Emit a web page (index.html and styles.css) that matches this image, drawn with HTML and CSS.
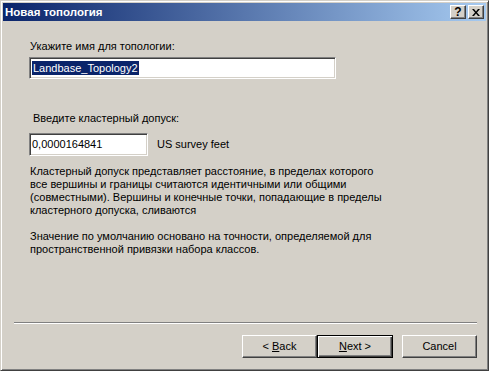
FILE: index.html
```html
<!DOCTYPE html>
<html lang="ru">
<head>
  <meta charset="UTF-8">
  <title>Новая топология</title>
  <link rel="stylesheet" href="styles.css">
</head>
<body>
  <div class="window">
    <div class="titlebar">
      <span class="title">Новая топология</span>
      <div class="caption-buttons">
        <span class="cap-btn help">?</span>
        <span class="cap-btn">
          <svg width="8" height="7" viewBox="0 0 8 7">
            <path d="M0 0h2l2 2.5L6 0h2L5 3.5 8 7H6L4 4.5 2 7H0l3-3.5z" fill="#000"/>
          </svg>
        </span>
      </div>
    </div>

    <div class="page">
      <div class="label">Укажите имя для топологии:</div>
      <div class="field name-field"><span class="selected">Landbase_Topology2</span></div>

      <div class="label label-tol">Введите кластерный допуск:</div>
      <div class="tol-row">
        <div class="field tol-field">0,0000164841</div>
        <span class="units">US survey feet</span>
      </div>

      <p class="note">Кластерный допуск представляет расстояние, в пределах которого<br>
        все вершины и границы считаются идентичными или общими<br>
        (совместными). Вершины и конечные точки, попадающие в пределы<br>
        кластерного допуска, сливаются</p>
      <p class="note">Значение по умолчанию основано на точности, определяемой для<br>
        пространственной привязки набора классов.</p>
    </div>

    <div class="footer">
      <div class="separator"></div>
      <div class="buttons">
        <button class="btn">&lt; <u>B</u>ack</button>
        <button class="btn default"><u>N</u>ext &gt;</button>
        <button class="btn cancel">Cancel</button>
      </div>
    </div>
  </div>
</body>
</html>
```

FILE: styles.css
```css
body {
  margin: 0;
  font-family: "Liberation Sans", Arial, sans-serif;
  font-size: 11px;
  line-height: 13px;
  color: #000;
  background: #d4d0c8;
}
.window {
  width: 489px;
  height: 371px;
  box-sizing: border-box;
  display: flex;
  flex-direction: column;
  padding: 2px;
  background: #d4d0c8;
  border: 1px solid;
  border-color: #d4d0c8 #404040 #404040 #d4d0c8;
  box-shadow: inset 1px 1px #fff, inset -1px -1px #808080;
}
.titlebar {
  height: 18px;
  display: flex;
  align-items: center;
  justify-content: space-between;
  padding: 0 2px 0 2px;
  background: linear-gradient(to right, #0a246a, #a6caf0);
}
.title {
  color: #fff;
  font-weight: bold;
  font-size: 11.5px;
}
.caption-buttons {
  display: flex;
  gap: 2px;
}
.cap-btn {
  width: 16px;
  height: 14px;
  box-sizing: border-box;
  display: flex;
  align-items: center;
  justify-content: center;
  background: #d4d0c8;
  border: 1px solid;
  border-color: #fff #404040 #404040 #fff;
  box-shadow: inset -1px -1px #808080;
}
.help {
  font-weight: bold;
  font-size: 12px;
  line-height: 12px;
}
.page {
  flex: 1;
  padding: 19px 0 0 26px;
}
.label {
  padding-left: 1px;
}
.label-tol {
  padding-left: 4px;
  margin-top: 33px;
}
.field {
  box-sizing: border-box;
  height: 22px;
  background: #fff;
  border: 1px solid;
  border-color: #808080 #fff #fff #808080;
  box-shadow: inset 1px 1px #404040, inset -1px -1px #d4d0c8;
  display: flex;
  align-items: center;
}
.name-field {
  width: 307px;
  margin-top: 4px;
  padding-left: 2px;
}
.selected {
  background: #0a246a;
  color: #fff;
  padding: 1px 1px 0 1px;
}
.tol-row {
  display: flex;
  align-items: center;
  gap: 9px;
  margin-top: 8px;
}
.tol-field {
  width: 119px;
  height: 23px;
  padding-left: 2px;
}
.note {
  margin: 9px 0 0 1px;
}
.note + .note {
  margin-top: 13px;
}
.footer {
  padding: 0 9px 10px 11px;
}
.separator {
  height: 1px;
  border-top: 1px solid #808080;
  background: #fff;
}
.buttons {
  display: flex;
  justify-content: flex-end;
  margin-top: 11px;
}
.btn {
  width: 75px;
  height: 23px;
  box-sizing: border-box;
  font: inherit;
  color: #000;
  background: #d4d0c8;
  border: 1px solid;
  border-color: #fff #404040 #404040 #fff;
  box-shadow: inset -1px -1px #808080;
  padding: 0;
}
.btn.default {
  border: 1px solid #000;
  box-shadow: inset 1px 1px #fff, inset -1px -1px #404040, inset -2px -2px #808080;
  width: 76px;
}
.btn.cancel {
  margin-left: 9px;
}
```
